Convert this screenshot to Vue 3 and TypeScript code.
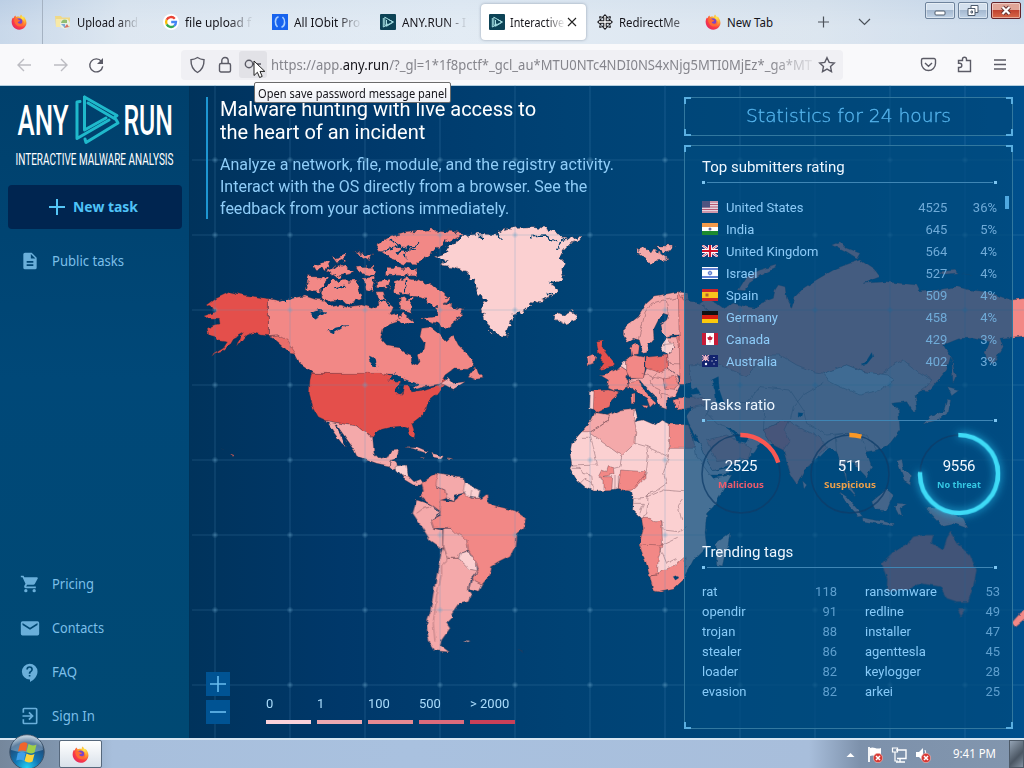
<script setup lang="ts">
interface Tab { title: string; icon: string; w: number; fade: boolean; active?: boolean }
const tabs: Tab[] = [
  { title: 'Upload and', icon: 'folder', w: 61, fade: true },
  { title: 'file upload f', icon: 'google', w: 66, fade: true },
  { title: 'All IObit Pro', icon: 'iobit', w: 66, fade: true },
  { title: 'ANY.RUN - I', icon: 'anyrun', w: 64, fade: true },
  { title: 'Interactive', icon: 'anyrun', w: 54, fade: true, active: true },
  { title: 'RedirectMe', icon: 'move', w: 61, fade: false },
  { title: 'New Tab', icon: 'fox', w: 46, fade: false },
]
const ratings = [
  { c: 'us', name: 'United States', n: 4525, p: '36%' },
  { c: 'in', name: 'India', n: 645, p: '5%' },
  { c: 'gb', name: 'United Kingdom', n: 564, p: '4%' },
  { c: 'il', name: 'Israel', n: 527, p: '4%' },
  { c: 'es', name: 'Spain', n: 509, p: '4%' },
  { c: 'de', name: 'Germany', n: 458, p: '4%' },
  { c: 'ca', name: 'Canada', n: 429, p: '3%' },
  { c: 'au', name: 'Australia', n: 402, p: '3%' },
]
const C = 2 * Math.PI * 39
const rings = [
  { k: 'mal', n: 2525, label: 'Malicious', w: 46, share: 0.205 },
  { k: 'sus', n: 511, label: 'Suspicious', w: 52, share: 0.05 },
  { k: 'ok', n: 9556, label: 'No threat', w: 44, share: 0.76 },
].map(r => ({ ...r, dash: `${r.share * C} ${C}` }))
const tagColumns = [
  [['rat', 118], ['opendir', 91], ['trojan', 88], ['stealer', 86], ['loader', 82], ['evasion', 82]],
  [['ransomware', 53], ['redline', 49], ['installer', 47], ['agenttesla', 45], ['keylogger', 28], ['arkei', 25]],
]
const legend = [
  { t: '0', k: 'l0' }, { t: '1', k: 'l1' }, { t: '100', k: 'l2' }, { t: '500', k: 'l3' }, { t: '> 2000', k: 'l4' },
]
const bottomNav = [
  { t: 'Pricing', i: 'cart', w: 42 }, { t: 'Contacts', i: 'mail', w: 52 }, { t: 'FAQ', i: 'faq', w: 25 }, { t: 'Sign In', i: 'login', w: 43 },
]
const gridX = [215, 290, 365, 440, 515, 590, 665, 740, 815, 890, 965]
const gridY = [160, 235, 310, 385, 460, 535, 610, 685]
</script>

<template>
  <div class="screen">
    <svg class="defs" width="0" height="0">
      <defs>
        <radialGradient id="foxg" cx=".75" cy=".2" r=".95">
          <stop offset="0" stop-color="#ffe84a" /><stop offset=".4" stop-color="#ff9a2e" /><stop offset=".7" stop-color="#fb3b44" /><stop offset="1" stop-color="#dc2468" />
        </radialGradient>
        <symbol id="fox" viewBox="0 0 16 16">
          <path d="M10 .5c1 1.200 1.300 1.800 1.800 2.300 1-.1 1.600.4 2.200 1.400 2 3 1.900 6.500-.1 8.900-3.200 3.900-9.300 3.500-12-.8C.2 9.700.2 6.300 1.700 3.800l.8.5c.3-1.200.9-2 1.800-2.800l.9 1.600C6.500 2.400 8 2.500 9 3 9 2 9.300 1.200 10 .5z" fill="url(#foxg)" />
          <circle cx="8" cy="7.800" r="3.500" fill="#7a44c8" />
          <path d="M3.200 5.200c2-.8 3.700-.2 4.800.8l1.500.6c-.6 1-1.700 1.200-2.700 1.500.1 1.400 2 2 3.600 1.300 1.400-.7 1.700-2.300.8-3.900 2.300 2 1.500 5.600-1.200 6.500-3.300 1-6.600-1.300-6.800-6.800z" fill="#ff6a33" />
        </symbol>
        <symbol id="anyrun" viewBox="0 0 16 16">
          <rect width="16" height="16" rx="1" fill="#0d4356" />
          <g fill="none" stroke="#a5dfe2" stroke-width="1"><path d="M3.300 4V13L12.500 8.300" /><path d="M4.800 3.200V11.500L8 10M4.800 3.200L13 8" /><path d="M6.500 6v6.300l7-4.300L9 5.800" /></g>
        </symbol>
        <symbol id="folder" viewBox="0 0 16 16">
          <path d="M0 2h6l1 1.500h8V13H1z" fill="#f0d987" /><path d="M1 5h12v8H1z" fill="#f7e9a8" />
          <circle cx="10" cy="10" r="5" fill="#e8f0e4" /><path d="M6 9a4 4 0 0 1 6-3v3z" fill="#90bd70" /><path d="M9 14l3-4 2 3z" fill="#d57266" /><path d="M6 10h4v4z" fill="#7daad5" />
        </symbol>
        <symbol id="google" viewBox="0 0 16 16">
          <circle cx="8" cy="8" r="8" fill="#fff" />
          <g fill="none" stroke-width="2.300"><path d="M11.800 4.700A5 5 0 0 0 3.600 5.800" stroke="#ea4335" /><path d="M3.600 5.800a5 5 0 0 0 .1 4.600" stroke="#fbbc05" /><path d="M3.700 10.400a5 5 0 0 0 7.500 1.500" stroke="#34a853" /><path d="M11.200 11.900A5 5 0 0 0 13 8H8.200" stroke="#4285f4" /></g>
        </symbol>
        <symbol id="iobit" viewBox="0 0 16 16">
          <rect width="16" height="16" fill="#1763ee" /><path d="M6.500 2.800C2.500 4 2.600 10.500 5.500 13M9.500 13.200C13.500 12 13.400 5.500 10.500 3" fill="none" stroke="#a9d0ff" stroke-width="1.600" />
        </symbol>
        <symbol id="move" viewBox="0 0 16 16">
          <path d="M8 .8l2.800 2.900H9.200v3.100h3.100V5.200L15.200 8l-2.900 2.800V9.200H9.200v3.100h1.600L8 15.200l-2.800-2.900h1.600V9.200H3.700v1.600L.8 8l2.900-2.800v1.600h3.100V3.700H5.200z" fill="#fff" stroke="#1d1d22" stroke-width="1.100" />
          <path d="M2.800 4.500V2.800h1.700M11.500 2.800h1.700v1.700M2.800 11.500v1.700h1.700M11.500 13.200h1.700v-1.700" fill="none" stroke="#1d1d22" stroke-width="1.200" />
        </symbol>
        <symbol id="err" viewBox="0 0 10 10"><circle cx="5" cy="5" r="4.700" fill="#d83a35" stroke="#f3c5c0" stroke-width=".6" /><path d="M3 3l4 4M7 3L3 7" stroke="#fff" stroke-width="1.500" /></symbol>
      </defs>
    </svg>

    <header class="tabbar">
      <div class="pinned"><svg width="16" height="16"><use href="#fox" /></svg></div>
      <div v-for="t in tabs" :key="t.title" class="tab" :class="{ active: t.active }">
        <svg width="16" height="16"><use :href="'#' + t.icon" /></svg>
        <svg class="tabtext" :class="{ fade: t.fade, soft: t.icon === 'move' }" :width="t.w + 2" height="18"><text x="0" y="14" :textLength="t.w" lengthAdjust="spacingAndGlyphs">{{ t.title }}</text></svg>
        <svg v-if="t.active" class="x" width="10" height="10" viewBox="0 0 10 10"><path d="M1 1l8 8M9 1L1 9" /></svg>
      </div>
      <svg class="tabtools" width="54" height="16" viewBox="0 0 54 16"><path d="M1 8h11M6.500 2.500v11M42 5l5.500 5.500L53 5" /></svg>
      <div class="winbtns">
        <span><svg width="30" height="17"><rect x="10" y="9" width="10" height="4" rx="1" /></svg></span>
        <span><svg width="30" height="17"><path d="M13 3.500h7v7h-3v3h-7v-7h3zM13 6.500h4v4M13 9h1.500v2H13z" /></svg></span>
        <span class="close"><svg width="30" height="17"><path class="cx" d="M11.500 5l7 7M18.500 5l-7 7" /><path class="cx2" d="M11.500 5l7 7M18.500 5l-7 7" /></svg></span>
      </div>
    </header>

    <div class="toolbar">
      <svg class="nav" width="110" height="24" viewBox="0 0 110 24">
        <path class="dim" d="M31 12H18M24 6l-6 6 6 6M54 12h13M61 6l6 6-6 6" />
        <path d="M101.500 8.500a6.500 6.500 0 1 0 1.200 4.800" /><path class="solid" d="M103 5v6h-6z" />
      </svg>
      <div class="urlbar">
        <svg class="i1" width="17" height="18" viewBox="0 0 17 18"><path d="M8.500 1.500c2 1.400 4 2 6.500 2.200.2 6-1.500 9.800-6.500 12.800C3.500 13.500 1.800 9.700 2 3.700c2.500-.2 4.500-.8 6.500-2.200z" /></svg>
        <svg class="i2" width="14" height="18" viewBox="0 0 14 18"><rect x="1.500" y="7.500" width="11" height="8.500" rx="1.500" /><path d="M3.800 7.500V4.700a3.200 3.200 0 0 1 6.400 0v2.800" /></svg>
        <span class="key"><svg width="20" height="14" viewBox="0 0 20 14"><circle cx="5" cy="6" r="3.700" /><path d="M9 6h8M14 6v3" /></svg></span>
        <svg class="url" width="542" height="24"><text x="0" y="17" textLength="541" lengthAdjust="spacingAndGlyphs">https://app.<tspan>any.run</tspan>/?_gl=1*1f8pctf*_gcl_au*MTU0NTc4NDI0NS4xNjg5MTI0MjEz*_ga*MT</text></svg>
        <svg class="star" width="18" height="18" viewBox="0 0 18 18"><path d="M9 1.700l2.200 4.700 5.100.6-3.800 3.500 1 5.100L9 13.100l-4.500 2.500 1-5.100L1.700 7l5.100-.6z" /></svg>
      </div>
      <svg class="right" width="88" height="20" viewBox="0 0 88 20">
        <path d="M3 3.500h11a1.500 1.500 0 0 1 1.500 1.500v3.500a7 7 0 0 1-14 0V5A1.500 1.500 0 0 1 3 3.500zM5 8l3.500 3.300L12 8" />
        <path d="M38.500 16.500v-4h1.200a2 2 0 0 0 0-4.200h-1.200V5.500h4V4.200a2 2 0 0 1 4 0v1.300h4v11z" />
        <path d="M74 5h12M74 9.500h12M74 14h12" />
      </svg>
    </div>

    <main class="content">
      <aside class="side">
        <svg class="logo" width="174" height="91" viewBox="8 85 174 91">
          <text class="big" x="17.500" y="135" textLength="51" lengthAdjust="spacingAndGlyphs" transform="translate(0 -67.500) scale(1 1.500)">ANY</text>
          <text class="big" x="123.500" y="135" textLength="49.500" lengthAdjust="spacingAndGlyphs" transform="translate(0 -67.500) scale(1 1.500)">RUN</text>
          <text class="sub" x="15.500" y="110" textLength="158" lengthAdjust="spacingAndGlyphs" transform="scale(1 1.500)">INTERACTIVE MALWARE ANALYSIS</text>
          <g fill="none" stroke="#1fb9cb" stroke-width="3" stroke-linejoin="round" stroke-linecap="round">
            <path d="M80 101.500L77 102v36.500L109 120" /><path d="M84.500 127V97L117 115.500 L115 117" /><path d="M88 103l28 16.500 2 3.500L86 142.500l-1-3.500" /><path d="M84.500 97v33L106 118" />
          </g>
        </svg>
        <button class="new"><svg width="16" height="16" viewBox="0 0 16 16"><path d="M0 8h16M8 0v16" /></svg><svg width="66" height="20"><text x="0" y="15" textLength="65" lengthAdjust="spacingAndGlyphs">New task</text></svg></button>
        <a class="item first"><svg class="ic" width="20" height="20" viewBox="0 0 24 24"><path d="M14 2H6a2 2 0 0 0-2 2v16a2 2 0 0 0 2 2h12a2 2 0 0 0 2-2V8zm2 16H8v-2h8zm0-4H8v-2h8zm-3-5V3.500L18.500 9z" /></svg>
          <svg width="74" height="22"><text x="0" y="16" textLength="72" lengthAdjust="spacingAndGlyphs">Public tasks</text></svg></a>
        <nav class="bottom">
          <a v-for="n in bottomNav" :key="n.t" class="item">
            <svg class="ic" width="20" height="20" viewBox="0 0 24 24">
              <path v-if="n.i === 'cart'" d="M7 18a2 2 0 1 0 0 4 2 2 0 0 0 0-4zM1 2v2h2l3.600 7.600-1.400 2.400C4.500 15.400 5.500 17 7 17h12v-2H7.400l1.100-2h7.500c.7 0 1.400-.4 1.700-1L21.300 5.500A1 1 0 0 0 20.400 4H5.200l-.9-2zm16 16a2 2 0 1 0 0 4 2 2 0 0 0 0-4z" />
              <path v-else-if="n.i === 'mail'" d="M21 4H3a2 2 0 0 0-2 2v13a2 2 0 0 0 2 2h18a2 2 0 0 0 2-2V6a2 2 0 0 0-2-2zm0 4.500l-9 5.500-9-5.500V6l9 5.700L21 6z" />
              <path v-else-if="n.i === 'faq'" d="M11.500 2a9.500 9.500 0 1 0 .5 19v3c4.900-2.300 9-7 9-12.500A9.500 9.500 0 0 0 11.500 2zm1 15.500h-2v-2h2zm0-3.500h-2c0-3.300 3-3 3-5a2 2 0 0 0-4 0h-2a4 4 0 0 1 8 0c0 2.500-3 2.800-3 5z" />
              <path v-else d="M10 15.600L11.500 17l5-5-5-5L10 8.400l2.700 2.600H3v2h9.700zM19 2H5a2 2 0 0 0-2 2v4h2V4h14v16H5v-4H3v4a2 2 0 0 0 2 2h14a2 2 0 0 0 2-2V4a2 2 0 0 0-2-2z" />
            </svg>
            <svg width="74" height="22"><text x="0" y="16" :textLength="n.w" lengthAdjust="spacingAndGlyphs">{{ n.t }}</text></svg>
          </a>
        </nav>
      </aside>

      <section class="stage">
        <svg class="map" width="835" height="653" viewBox="189 85 835 653">
          <defs>
            <filter id="rough" x="-5%" y="-5%" width="110%" height="110%"><feTurbulence type="fractalNoise" baseFrequency=".14" numOctaves="2" seed="4" /><feDisplacementMap in="SourceGraphic" scale="4" xChannelSelector="R" yChannelSelector="G" /><feGaussianBlur stdDeviation=".25" /></filter>
            <filter id="rough2" x="-5%" y="-5%" width="110%" height="110%"><feTurbulence type="fractalNoise" baseFrequency=".17" numOctaves="2" seed="9" /><feDisplacementMap in="SourceGraphic" scale="8" xChannelSelector="R" yChannelSelector="G" /><feGaussianBlur stdDeviation=".25" /></filter>
            <radialGradient id="node"><stop offset="0" stop-color="#6aa5c8" stop-opacity=".45" /><stop offset="1" stop-color="#6aa5c8" stop-opacity="0" /></radialGradient>
          </defs>
          <g class="land rough">
            <g transform="translate(190 220) scale(.33333)">
              <path class="c2" d="M235 236 270 243 320 232 345 228 375 238 400 240 425 260 450 255 470 262 515 255 545 265 570 255 560 215 580 215 590 245 610 262 600 285 620 280 630 300 600 310 580 325 572 355 590 375 625 380 645 398 663 405 665 430 680 437 690 425 685 405 700 390 703 370 690 350 695 325 720 322 745 340 770 365 790 345 805 375 830 400 845 420 855 435 835 448 790 447 765 465 750 492 700 500 680 510 660 490 625 468 600 465 372 460 360 450 330 430 315 402 290 365 262 345 235 347Z" />
              <path class="c4" d="M235 236 235 347 215 345 190 338 165 348 140 380 150 350 160 338 130 355 118 375 95 395 62 408 100 385 112 366 85 362 78 350 56 345 52 325 72 315 90 312 88 298 55 297 42 288 70 278 82 275 52 255 80 235 120 216 160 225Z" />
              <path class="c3" d="M235 347 262 345 290 360 318 402 300 400 275 375 245 350Z" />
              <path class="c4" d="M365 460H575L600 468 625 468 632 480 625 522 640 520 645 495 655 495 665 515 700 510 745 495 760 475 770 490 755 505 740 525 715 545 705 575 685 595 665 610 675 640 672 660 660 645 655 625 635 618 600 622 575 628 555 640 548 655 530 635 515 630 500 618 460 612 410 602 385 590 368 560 358 520 360 480Z" />
              <path class="c1" d="M410 602 460 612 500 618 515 630 530 635 548 655 552 700 570 718 595 712 605 692 627 690 620 715 600 722 598 738 560 730 500 708 490 685 465 650 440 615 435 612 450 640 466 677 455 670 430 635Z" />
              <path class="c1" d="M598 738 602 720 618 728 625 742 608 748Z" /><path class="c0" d="M618 738 650 735 655 768 635 765 620 750Z" />
              <path class="c1" d="M635 765 655 768 672 785 692 778 700 790 690 795 670 795 645 780Z" />
              <path class="c1" d="M645 680 680 680 715 695 705 698 670 686ZM725 700 760 708 755 716 730 712ZM775 713l10 2-10 2zM690 713h14l-6 4z" />
              <path class="c2" d="M835 470 858 440 865 460 880 475 855 478Z" /><path class="c1" d="M750 490 775 473 790 490 825 485 790 508 765 495Z" />
              <path class="c3" d="M125 702l8 2-4 6zM95 685l6 2" />
            </g>
          </g>
          <g class="land rough2">
            <g transform="translate(190 220) scale(.33333)">
              <path class="c2" d="M560 75 600 50 650 38 720 30 800 35 820 45 770 65 740 90 700 115 690 132 640 130 600 115 575 95ZM590 142 680 148 680 168 590 165ZM612 185 650 172 700 185 735 200 775 235 765 250 818 270 800 300 770 325 740 310 695 295 740 290 740 265 700 235 650 225 615 218ZM390 215 430 182 500 180 515 235 480 252 440 240 405 245ZM355 170 415 172 385 217 346 207ZM370 145 410 120 418 138 385 152ZM408 150 450 133 495 158 440 172ZM490 92 545 108 535 122ZM498 142 552 138 550 168 508 160ZM522 178 557 173 550 212 528 205ZM560 182 602 178 595 202 560 200ZM630 238 667 233 662 277 632 270ZM615 300 640 282 672 305 650 314ZM430 115 466 104 466 120 440 128Z" />
              <path class="hole" d="M358 282 380 272 408 275 380 295ZM410 332 468 316 430 341ZM538 408 552 415 562 447 546 435ZM590 480 613 463 642 475 625 484ZM630 488 633 522 621 522 624 500ZM645 485 682 493 670 505ZM665 512 702 500 700 508Z" />
              <path class="streak" d="M575 90 625 80 680 92M600 60 640 85 650 115M650 180 645 215M430 205 465 200M560 235 600 255M270 243 320 230M620 100 690 70" />
            </g>
            <g transform="translate(400 220) scale(.33333)">
              <path class="c0" d="M103 110 145 95 135 85 180 60 185 48 240 42 290 45 300 30 350 22 400 20 440 25 475 40 480 50 510 55 542 52 535 62 510 68 490 90 480 110 498 130 485 150 492 175 460 190 470 220 440 235 400 250 370 275 340 285 330 310 318 349 290 345 270 325 250 290 243 270 260 240 235 225 225 190 200 155 160 140 120 135 145 125Z" />
              <path class="streak" d="M390 50 440 48 470 65M445 185 475 190M440 220 470 222M285 45 305 52M250 60 240 45M495 55 470 90" />
              <path class="c0" d="M456 280 475 278 490 285 515 273 534 288 525 300 495 312 475 303Z" />
              <path class="c1" d="M708 90 735 83 750 95 765 90 780 100 808 120 780 118 765 120 750 135 735 112ZM760 78 827 78 815 90 790 97Z" />
            </g>
          </g>
          <g class="land rough">
            <g transform="translate(400 220) scale(.33333)">
              <path class="c1" d="M670 325 715 290 740 250 765 228 800 222 835 215 860 220V345L820 345 800 350 785 335 780 315 800 300 805 285 790 280 775 300 760 330 762 355 745 375 740 395 728 397 718 360 700 355 682 367 670 345Z" />
              <path class="bd" d="M715 360 725 320 735 280 755 250 790 240 800 248 805 285M800 240 825 235 850 232" />
              <path class="c4" d="M590 366 610 363 605 380 615 395 630 415 644 432 635 442 598 449 612 430 600 425 605 405 595 395Z" />
              <path class="c2" d="M558 412 580 402 588 410 582 430 562 435ZM600 465 625 460 650 448 665 440 685 455 680 475 685 500 665 510 640 512 622 505 625 480ZM692 385 705 368 718 380 715 402 695 405Z" />
              <path class="c3" d="M578 512 625 510 660 518 635 540 628 560 605 570 590 577 578 565Z" /><path class="c0" d="M568 512 582 514 580 568 566 565Z" />
              <path class="c0" d="M650 448 680 420 682 452 665 440Z" />
              <path class="c1" d="M683 478 730 472 740 445 803 445 835 470 840 500 825 530 800 535 800 568 780 560 770 535 735 500 720 480 700 490 685 490Z" />
              <path class="c2" d="M680 415 700 405 735 412 735 450 730 475 690 475 680 455ZM685 485 720 480 725 500 745 525 767 545 750 562 740 535 715 520 700 505 685 505ZM695 525l10-3v25l-8 2zM725 555l20 2-5 8zM790 475 825 468 838 490 825 508 795 505ZM822 540 860 530V572L825 562Z" />
              <path class="c3" d="M738 412 800 405 803 445 780 458 738 445Z" />
              <path class="c0" d="M780 385 800 352 820 358 825 385 800 405Z" /><path class="c1" d="M800 352 860 350V475L830 465 803 445 800 405 825 385Z" />
              <path class="bd" d="M780 375 825 370M803 430 850 432M725 460 790 480 795 505M750 480 760 500 780 510 785 535M770 460 755 478M785 520 820 530M830 470 850 480" />
              <path class="c2" d="M848 225 862 225V395L835 380 830 350 850 345Z" />
              <path class="c0" d="M585 578 630 585 660 570 705 565 712 590 705 605 730 600 765 615 785 600 810 612 860 620 920 750 940 775 995 765 940 860 920 880 915 940 920 980 880 1020 875 1030 850 1075 820 1105 780 1115 760 1112 750 1070 735 1020 718 975 730 925 725 895 698 870 700 835 695 815 660 805 615 812 580 813 560 805 530 780 510 745 515 735 510 700 515 670 545 635 575 600Z" />
              <path class="c1" d="M585 578 630 585 620 605 575 635 545 635 575 600ZM630 585 660 570 705 565 700 585 708 625 705 670 665 708 570 640 620 605Z" />
              <path class="c2" d="M808 612 865 615 880 655 890 685H808ZM595 770 605 750 620 755 625 740 640 742 642 762 610 770 638 770 635 812 612 812 612 780ZM655 805 662 750 690 752 735 755 735 775 715 795 700 810 675 812Z" />
              <path class="c2" d="M725 895 750 895 765 905 785 905 788 980 775 1010 772 1065 750 1068 735 1020 718 975 730 925ZM750 1068 772 1065 785 1050 820 1040 855 1010 855 1075 820 1108 780 1116 760 1112Z" />
              <path class="bd" d="M570 640 592 735 515 738M545 655H570M705 670 740 680 745 710 738 760 705 800M740 680 805 710V660M665 708 660 740 642 745M805 710 790 760 800 790 765 815 745 820M515 745 540 745 545 760 575 765 580 813M700 835 740 832 745 820 740 885M740 832 790 810 850 815M725 895 740 885M785 905 790 930 835 935 860 920M718 975 780 978 830 955M780 980 800 1030 830 1015M645 765V808M655 765V805M540 790 555 775 575 785M850 840 835 860 845 900M700 850 730 850 720 880" />
              <path class="hole" d="M820 1070l12-4 4 8-10 6z" />
              <path class="c0" d="M948 970 990 938 985 970 970 1038 950 1035Z" />
            </g>
            <g transform="translate(400 450) scale(.33333)">
              <path class="c2" d="M95 78 112 70 115 90 110 110 135 120 140 145 125 150 122 185 95 165 70 150 62 140 70 120 65 100Z" />
              <path class="c1" d="M112 72 150 78 190 85 200 110 190 130 165 135 160 155 140 145 135 120 108 108ZM50 150 95 165 120 190 92 210 100 235 128 240 128 297 90 270 65 230 38 190ZM130 235 155 235 200 265 205 300 180 310 175 325 140 325 128 290ZM215 388 245 405 235 424 207 415ZM128 290 140 325 175 325 215 358 235 360 210 390 205 420 215 430 205 455 175 462 155 490 160 500 140 520 150 535 125 570 120 585 148 606 105 602 90 580 82 550 80 520 90 490 100 430 115 350Z" />
              <path class="c0" d="M195 98 240 120 235 145 200 142 190 120ZM180 310 205 302 230 340 232 362 210 358 175 325Z" />
              <path class="c2" d="M122 150 160 155 190 130 210 145 245 145 260 133 265 160 300 172 345 182 377 205 372 235 348 255 345 290 330 320 300 335 275 350 270 375 245 405 215 390 235 360 230 340 205 300 200 270 170 250 155 235 130 235 100 235 92 210 120 195Z" />
              <path class="bd" d="M140 325 125 350 125 370 110 440 100 520 105 575M50 190 70 175 95 170M215 120 212 142" />
              <path class="c0" d="M188 572l8-2 2 6zM200 571l10 2-8 4zM355 598l14 6" />
            </g>
            <g transform="translate(680 90) scale(.33333)">
              <path class="c2" d="M-5 605 10 630 60 640 90 665 60 640 80 625 110 640 130 655 160 640 200 650 230 655 240 640 280 625 285 600 295 585 315 590 320 625 335 655 345 620 370 595 400 575 425 560 470 535 510 520 540 510 585 540 600 560 550 580 620 575 660 580 710 585 720 605 770 600 830 590 870 600 920 605 995 630 1040 625V737L1010 740 960 745 970 770 940 820 925 820 915 790 930 755 880 745 840 745 790 765 812 800 800 840 745 905 700 900 0 880Z" />
              <path class="c2" d="M175 600 200 560 240 540 290 525 285 534 240 557 210 577 195 602ZM455 465 480 455 500 475 540 490 530 507 500 488ZM775 545l50-4 10 8-45 4zM845 552l30 2M815 800l12 60-8 20z" />
              <path class="hole" d="M540 826 560 812 575 788 578 800 560 822Z" />
            </g>
            <g transform="translate(680 380) scale(.33333)">
              <path class="cm" d="M25-45 110-50 200-10 260-75 300-75 350-45 400-25 430-20 500-45 550-25 600-15 640-45 670-60 720-20 755 0 740 20 705 45 712 85 700 97 680 65 635 70 655 85 660 150 630 190 590 210 560 215 575 260 560 292 530 260 510 240 495 250 500 300 520 330 530 352 505 325 490 270 470 215 445 205 420 230 375 265 350 312 335 290 310 210 280 195 240 190 225 215 205 235 100 272 85 250 60 190 30 140 20 110 40 80Z" />
              <path class="cp" d="M430-20 500-45 550-25 620-15 645 0 600 30 540 45 480 20 450 5ZM60 190 85 250 100 272 160 260 140 285 90 285 50 230 40 180Z" />
              <path class="c2" d="M250 150 300 125 330 125 360 145 420 170 440 200 375 265 350 312 335 290 310 210 280 195ZM-5 50 70 52 75 75-5 90ZM80 180 140 165 215 205 205 235 110 245Z" />
              <path class="ired" d="M250 150 300 125 325 122 312 150 330 180 310 210 280 195Z" />
              <path class="hole" d="M95 0 115-10 118 30 130 65 110 70 105 30ZM138 142 162 160 170 182 200 188 205 175 180 170 155 148ZM20 30 50 20 60 40 25 45Z" />
              <path class="hole" d="M355 98l14 2-4 10-10-2z" />
              <path class="bd" d="M330 125 340 80 370 45 430 10M370 90 380 130 440 165 490 160 560 165 590 210M250 150 255 80 200 70 130 75M80 100 110 130 140 140M470 215 465 165 500 160M500 160 545 170 560 215M200 70 240 20 330 30 370 90M100 70 75 110" />
              <path class="c1" d="M478 335 500 350 547 405 535 407 500 370ZM545 413 640 430 635 438 545 423ZM575 365 620 328 640 345 620 392 590 390ZM645 380l10-10 25 2-20 12 6 25-10-8zM650 240 665 235 670 265 695 290 690 315 675 305ZM733 383 780 385 850 415 867 447 820 430 785 437ZM730 132 750 110 790 95 800 58 812 60 805 95 775 120ZM803 20 838 30 815 47ZM368 303 380 315 372 327Z" />
            </g>
            <g transform="translate(680 540) scale(.33333)">
              <path class="c3" d="M605 70 640 35 680 15 700-10 730-15 760-15 755 10 790 30 800-5 812-25 830 10 870 45 890 90 880 140 865 185 830 185 800 175 780 140 720 130 690 145 640 155 620 150 622 120ZM832 208 857 208 843 230Z" />
              <path class="c2" d="M995 248 1020 220 1040 205V232L1005 260Z" />
            </g>
          </g>
          <g class="grid">
            <path v-for="x in gridX" :key="'x' + x" :d="`M${x} 85V738`" />
            <path v-for="y in gridY" :key="'y' + y" :d="`M192 ${y}H1024`" />
          </g>
          <g v-for="x in gridX" :key="'n' + x"><circle v-for="y in gridY" :key="y" :cx="x" :cy="y" r="3.500" fill="url(#node)" /></g>
        </svg>

        <div class="intro">
          <h1>Malware hunting with live access to<br>the heart of an incident</h1>
          <p>Analyze a network, file, module, and the registry activity.<br>Interact with the OS directly from a browser. See the<br>feedback from your actions immediately.</p>
        </div>

        <div class="mapfoot">
          <div class="zoom">
            <button><svg width="24" height="24"><path d="M4 12h16M12 4v16" /></svg></button>
            <button><svg width="24" height="24"><path d="M4 12h16" /></svg></button>
          </div>
          <div class="legend"><div v-for="l in legend" :key="l.k"><span>{{ l.t }}</span><i :class="l.k"></i></div></div>
        </div>

        <div class="stats">
          <div class="frame title"><i class="tl"></i><i class="tr"></i><i class="bl"></i><i class="br"></i>
            <svg width="208" height="26"><text x="1" y="18" textLength="205" lengthAdjust="spacingAndGlyphs">Statistics for 24 hours</text></svg>
          </div>
          <div class="frame body"><i class="tl"></i><i class="tr"></i><i class="bl"></i><i class="br"></i>
            <h2>Top submitters rating</h2><div class="rule"></div>
            <div class="ratings">
              <div v-for="r in ratings" :key="r.c" class="row">
                <svg class="flag" width="16" height="12" viewBox="0 0 16 12">
                  <g v-if="r.c === 'us'"><rect width="16" height="12" fill="#e6d5e0" /><path d="M0 1h16M0 3.500h16M0 6h16M0 8.500h16M0 11h16" stroke="#b85a74" stroke-width="1.200" /><rect width="8" height="6.500" fill="#4f5480" /></g>
                  <g v-if="r.c === 'in'"><rect width="16" height="12" fill="#fff" /><rect width="16" height="4" fill="#f29a4a" /><rect y="8" width="16" height="4" fill="#1d8a2f" /><circle cx="8" cy="6" r="1.500" fill="#6468a5" /></g>
                  <g v-if="r.c === 'gb'"><rect width="16" height="12" fill="#1c2f78" /><path d="M0 0l16 12M16 0L0 12" stroke="#fff" stroke-width="2.400" /><path d="M0 0l16 12M16 0L0 12" stroke="#d0263c" stroke-width=".8" /><path d="M8 0v12M0 6h16" stroke="#fff" stroke-width="4" /><path d="M8 0v12M0 6h16" stroke="#d0142c" stroke-width="2.200" /></g>
                  <g v-if="r.c === 'il'"><rect width="16" height="12" fill="#fff" /><path d="M0 2h16M0 10h16" stroke="#2f59c8" stroke-width="1.500" /><path d="M8 3.800l2 3.300H6zM8 8.300L6 5h4z" fill="none" stroke="#4468c8" stroke-width=".7" /></g>
                  <g v-if="r.c === 'es'"><rect width="16" height="12" fill="#c9242c" /><rect y="3" width="16" height="6" fill="#f8c41c" /><rect x="3.500" y="4.500" width="3" height="3" fill="#b06030" /></g>
                  <g v-if="r.c === 'de'"><rect width="16" height="4" fill="#111" /><rect y="4" width="16" height="4" fill="#d81e10" /><rect y="8" width="16" height="4" fill="#fac90c" /></g>
                  <g v-if="r.c === 'ca'"><rect width="16" height="12" fill="#fff" /><path d="M0 0h4v12H0zM12 0h4v12h-4zM8 2.500l1 1.500 1.800.5L9.500 7 8.300 7v2.500h-.6V7L6.300 7 5.200 4.500 7 4z" fill="#c71c38" /></g>
                  <g v-if="r.c === 'au'"><rect width="16" height="12" fill="#13246e" /><path d="M0 0l7 6M7 0L0 6M3.500 0v6M0 3h7" stroke="#f0b8c4" stroke-width="1.200" /><circle cx="4" cy="9" r="1.200" fill="#fff" /><path d="M12 2v1M12 8.500v1M10 5.500v1M14 5v1" stroke="#fff" /></g>
                </svg>
                <span class="nm">{{ r.name }}</span><span class="ct">{{ r.n }}</span><span class="pc">{{ r.p }}</span>
              </div>
              <span class="thumb"></span>
            </div>
            <h2>Tasks ratio</h2><div class="rule"></div>
            <div class="rings">
              <svg v-for="r in rings" :key="r.k" :class="r.k" width="96" height="96" viewBox="-48 -48 96 96">
                <circle class="track" r="39" /><circle class="arc" r="39" :stroke-dasharray="r.dash" transform="rotate(-91)" />
                <text class="num" y="-3">{{ r.n }}</text><text class="lb" y="14" :textLength="r.w" lengthAdjust="spacingAndGlyphs">{{ r.label }}</text>
              </svg>
            </div>
            <h2>Trending tags</h2><div class="rule"></div>
            <div class="tags"><div v-for="(col, i) in tagColumns" :key="i"><p v-for="t in col" :key="t[0]"><span>{{ t[0] }}</span><b>{{ t[1] }}</b></p></div></div>
          </div>
        </div>
      </section>
    </main>

    <footer class="taskbar">
      <div class="task"><svg width="17" height="17"><use href="#fox" /></svg></div>
      <svg class="tray" width="94" height="20" viewBox="845 744 94 20">
        <path d="M846.500 757l4-4 4 4z" fill="#fff" />
        <path d="M869 747v15" stroke="#fff" stroke-width="1.800" /><path d="M870 748c4-2 6 2 11 0v8c-5 2-7-2-11 0z" fill="#fff" /><use href="#err" x="873" y="753" width="10" height="10" />
        <path d="M896 750h10v8.500h-9M900 759v3M896 762h9" fill="none" stroke="#fff" stroke-width="1.400" /><path d="M892.500 748h5v4h-5zM895 752v9h3" fill="none" stroke="#fff" stroke-width="1.200" />
        <path d="M916 752h3l4-4v13l-4-4h-3z" fill="#fff" /><path d="M925 750q2 4 0 8" stroke="#fff" fill="none" /><use href="#err" x="921" y="753" width="10" height="10" />
      </svg>
      <svg class="clock" width="44" height="20"><text x="0" y="14" textLength="43" lengthAdjust="spacingAndGlyphs">9:41 PM</text></svg>
      <div class="peek"></div>
    </footer>
    <svg class="orb" width="38" height="36" viewBox="8 733 38 36">
      <defs><radialGradient id="orbg" cx=".5" cy=".95" r=".9"><stop offset="0" stop-color="#22d0f4" /><stop offset=".4" stop-color="#1276b4" /><stop offset=".8" stop-color="#1d4a78" /><stop offset="1" stop-color="#9fb8cc" /></radialGradient></defs>
      <circle cx="27" cy="752" r="17.200" fill="url(#orbg)" stroke="#3e5268" />
      <path d="M11 750a16 15 0 0 1 32 0q-16 5-32 0z" fill="#fff" opacity=".3" />
      <path d="M20 744q4-3 7.500-.5l-1.500 8q-4-2-8 0z" fill="#f0642c" /><path d="M28.500 744q4 2.500 8 .5l-2 8q-4 2-8-.5z" fill="#9fcf48" /><path d="M17.700 753q4-2 8 0l-2 8q-3-2-7.500-.5z" fill="#3f9ee8" /><path d="M26.500 753.500q4 2.500 8 .5l-2 7.500q-4 2-8-.5z" fill="#fbd23c" />
    </svg>
    <div class="tip"><svg width="190" height="16"><text x="0" y="12.500" textLength="189" lengthAdjust="spacingAndGlyphs">Open save password message panel</text></svg></div>
    <svg class="cursor" width="14" height="20" viewBox="0 0 14 20"><path d="M1 1v14.500l3.400-3.200 2.200 5.200 2.600-1.100-2.200-5h4.800z" fill="#fff" stroke="#222" /></svg>
  </div>
</template>

<style>
html, body { margin: 0; overflow: hidden; }
</style>
<style scoped>
* { box-sizing: border-box; }
.screen { width: 1024px; height: 768px; position: relative; display: flex; flex-direction: column; overflow: hidden; font-family: Roboto, "Liberation Sans", sans-serif; }
svg { display: block; flex: none; }
.defs { position: absolute; }
.tabbar { height: 44px; display: flex; align-items: center; background: linear-gradient(#b8cbe000 0, #ffffff30 60%), linear-gradient(90deg, #bccfe5 0, #d6e2ee 12%, #dce7f2 45%, #d4e0ec 80%, #c2d4e8); flex: none; position: relative; }
.pinned { width: 43px; height: 44px; border-right: 1px solid #a5b2c2; padding: 14px 0 0 11px; }
.tab { width: 108.400px; height: 36px; padding-left: 12px; display: flex; align-items: center; gap: 6px; flex: none; }
.tab.active { width: 105px; margin: 0 -1px 0 4px; padding-left: 8px; background: #fff; border-radius: 4px; box-shadow: 0 0 3px #5c6a8090; gap: 5px; }
.x { margin-left: -4px; }
.x path { stroke: #222; stroke-width: 1.100; }
.tabtext text, .url text, .tip text { font-family: "Noto Sans", "Open Sans", sans-serif; font-size: 12px; fill: #15141a; }
.fade { -webkit-mask-image: linear-gradient(90deg, #000 65%, #0002 94%); mask-image: linear-gradient(90deg, #000 65%, #0002 94%); }
.soft { -webkit-mask-image: linear-gradient(90deg, #000 65%, #0009); mask-image: linear-gradient(90deg, #000 65%, #0009); }
.tabtools { margin-left: 16px; fill: none; stroke: #4c525a; stroke-width: 1.200; }
.winbtns { margin-left: auto; align-self: flex-start; display: flex; gap: 3px; padding: 2px 3px 0 0; }
.winbtns span { width: 30px; height: 17px; border: 1px solid #6e839c; border-radius: 2px; background: linear-gradient(#d3e0ee 45%, #a5b9d0 50%, #c0d2e6); box-shadow: inset 0 0 0 1px #ffffff70; }
.winbtns svg { margin: -1px; fill: #fff; stroke: #4d5b6c; stroke-width: 1; }
.winbtns .close { border-color: #64232a; background: linear-gradient(#e0a598 45%, #c14330 50%, #d8694a); }
.winbtns .cx { stroke: #63302f; stroke-width: 4; } .winbtns .cx2 { stroke: #fff; stroke-width: 2.200; }
.toolbar { height: 41px; display: flex; align-items: center; background: #f9f9fb; flex: none; }
.toolbar svg { fill: none; stroke: #5b5b66; stroke-width: 1.400; }
.nav { margin-right: 71px; } .nav .dim { stroke: #bcbcc2; } .nav .solid { fill: #5b5b66; stroke: none; }
.urlbar { width: 662px; height: 30px; background: #f0f0f4; border-radius: 4px; display: flex; align-items: center; padding-left: 8px; }
.i1 { margin-right: 12px; } .i2 { margin-right: 7px; }
.key { width: 28px; height: 27px; background: #e2e2e7; border-radius: 3px; padding: 7px 0 0 5px; margin-right: 4px; }
.urlbar .url { -webkit-mask-image: linear-gradient(90deg, #000 92%, #0002); mask-image: linear-gradient(90deg, #000 92%, #0002); }
.urlbar .url text { stroke: none; fill: #85858c; font-size: 14.500px; } .url tspan { fill: #15141a; }
.star { margin-left: 5px; }
.right { margin-left: 77px; }
.content { height: 653px; display: flex; border-top: 1px solid #b4cfdf; flex: none; background: #004878; }
.side { width: 190px; height: 652px; flex: none; background: linear-gradient(#00406c, #004878 45%, #004973); display: flex; flex-direction: column; padding: 0 8px; border-right: 1px solid #003258; }
.logo { margin-top: -1px; }
.logo text { fill: #fff; font-family: Roboto, sans-serif; }
.logo .big { font-size: 28.500px; font-weight: 500; } .logo .sub { font-size: 11px; font-weight: 400; }
.new { width: 174px; height: 44px; margin-top: 9px; border: 0; border-radius: 4px; background: #002550; display: flex; align-items: center; padding: 0 0 0 41px; gap: 8px; flex: none; }
.new path { stroke: #55c6f6; stroke-width: 2; }
.new text { font: bold 15px "Noto Sans", sans-serif; fill: #4fc3f7; }
.item { height: 44px; display: flex; align-items: center; gap: 12px; padding-left: 12px; }
.item .ic { fill: #6aafda; } .item text { font: 14px "Noto Sans", sans-serif; fill: #7cbfe8; }
.first { margin-top: 10px; }
.bottom { margin-top: 280px; }
.stage { flex: 1; position: relative; height: 652px; background: linear-gradient(90deg, #00335c 0, #00386a 18%, #004274 45%, #004a7e 80%, #004f8c); }
.map { position: absolute; left: -1px; top: -1px; }
.land path { stroke: #54333f; stroke-opacity: .6; stroke-width: 1.800; stroke-linejoin: round; }
.rough { filter: url(#rough); } .rough2 { filter: url(#rough2); }
.c0 { fill: #fbd0d1; } .c1 { fill: #f4a9aa; } .c2 { fill: #f28886; } .c3 { fill: #ea6e6b; } .c4 { fill: #e4504c; }
.cm { fill: #e4a3a6; } .cp { fill: #e0bfc8; } .ired { fill: #ff7070; }
.land .hole { fill: #00406f; stroke: #00406f; }
.land .streak { fill: none; stroke: #003c6a; stroke-opacity: 1; stroke-width: 5; }
.land .bd { fill: none; }
.grid path { stroke: #5b9cc4; stroke-opacity: .17; stroke-width: 1.600; }
.intro { position: absolute; left: 16px; top: 11px; height: 122px; border-left: 2px solid #1e96d2; padding: 1px 0 0 12px; }
.intro h1 { margin: 0; font-weight: 400; font-size: 20px; line-height: 23px; color: #fff; white-space: nowrap; }
.intro p { margin: 10px 0 0; font-size: 16px; line-height: 22px; color: #8fcdf8; white-space: nowrap; }
.mapfoot { position: absolute; left: 16px; bottom: 14px; display: flex; align-items: flex-end; gap: 36px; }
.zoom { display: flex; flex-direction: column; gap: 4px; }
.zoom button { width: 24px; height: 24px; border: 0; padding: 0; background: #005393; } .zoom path { stroke: #68bdf0; stroke-width: 1.600; }
.legend { display: flex; gap: 6px; } .legend div { width: 45px; }
.legend span { display: block; font-size: 13px; line-height: 16px; color: #aadcfb; white-space: nowrap; }
.legend i { display: block; height: 4px; margin-top: 8px; } .l0 { background: #fad2da; } .l1 { background: #eda9b1; } .l2 { background: #e78a92; } .l3 { background: #dc6b7c; } .l4 { background: #ca4058; }
.stats { position: absolute; left: 494px; top: 11px; width: 329px; }
.frame { position: relative; border: 1px solid #32789f; background: rgba(0, 75, 126, .72); }
.frame > i { position: absolute; width: 7px; height: 7px; border: 0 solid #5aaee0; }
.tl { left: -1px; top: -1px; border-width: 2px 0 0 2px !important; } .tr { right: -1px; top: -1px; border-width: 2px 2px 0 0 !important; }
.bl { left: -1px; bottom: -1px; border-width: 0 0 2px 2px !important; } .br { right: -1px; bottom: -1px; border-width: 0 2px 2px 0 !important; }
.title { height: 39px; display: flex; align-items: center; justify-content: center; padding-top: 1px; background: rgba(0, 72, 122, .6); }
.title text { font: 200 17px "DejaVu Sans", sans-serif; fill: #55b4ec; stroke: #55b4ec; stroke-width: .3; }
.body { margin-top: 9px; height: 584px; padding: 11px 15px 0 17px; }
.body h2 { margin: 0; font-weight: 400; font-size: 15px; line-height: 20px; color: #eef7ff; }
.rule { height: 1px; margin: 5px 4px 0 5px; background: #3f86b5; position: relative; }
.rule::before, .rule::after { content: ""; position: absolute; top: -1px; width: 3px; height: 3px; background: #7cc4f0; } .rule::before { left: -5px; } .rule::after { right: -4px; }
.ratings { position: relative; margin-top: 13px; height: 199px; }
.row { height: 22px; display: flex; align-items: center; font-size: 13px; color: #8ccbf8; }
.nm { width: 151px; margin-left: 8px; white-space: nowrap; } .ct { width: 72px; text-align: right; } .pc { width: 50px; text-align: right; }
.ct, .pc { color: #6fabd8; }
.thumb { position: absolute; right: -12px; top: 0; width: 4px; height: 13px; background: #4fa8e0; }
.rings { height: 109px; margin: 5px 0 7px -9px; display: flex; gap: 13px; }
.rings svg { overflow: visible; } .rings circle { fill: none; }
.track { stroke: #0d3c68; stroke-width: 1.600; opacity: .75; } .arc { stroke-width: 4.400; }
.rings text { text-anchor: middle; } .num { font-size: 15px; fill: #f2f8ff; letter-spacing: -.3px; } .lb { font: bold 9.500px "Noto Sans", sans-serif; }
.mal .arc { stroke: #fa5752; } .mal .lb { fill: #ef5b6c; } .sus .arc { stroke: #fa9826; } .sus .lb { fill: #eda04a; }
.ok .arc { stroke: #3edaf6; filter: drop-shadow(0 0 4px #22b8e8); } .ok .lb { fill: #35c8e4; }
.tags { display: flex; justify-content: space-between; margin: 14px -3px 0 0; }
.tags > div { width: 135px; } .tags p { margin: 0; height: 20px; line-height: 20px; font-size: 13px; display: flex; justify-content: space-between; color: #86caf8; } .tags b { font-weight: 400; color: #5e9fce; }
.taskbar { height: 30px; flex: none; border-top: 2px solid #d8e6f2; background: linear-gradient(90deg, #75879c 0, #8095ad 5.500%, #a8bfdc 11%, #a9c1df 40%, #a8bedb 79%, #7d91ab 84%, #8296ae 100%); display: flex; align-items: center; padding-left: 59px; }
.task { width: 43px; height: 28px; border-radius: 2px; border: 1px solid #56687c; background: linear-gradient(#fff, #d9e1ea); display: flex; align-items: center; justify-content: center; }
.tray { margin-left: 743px; }
.clock { margin-left: 14px; } .clock text { font: 12px "Noto Sans", sans-serif; fill: #fff; }
.peek { margin-left: auto; width: 15px; height: 28px; border: 1px solid #4d5a68; background: linear-gradient(135deg, #94a3b4, #4b5663 60%, #8492a2); }
.orb { position: absolute; left: 8px; top: 733px; }
.tip { position: absolute; left: 254px; top: 82px; width: 197px; height: 21px; border: 1px solid #6c6c6c; border-radius: 2px; background: linear-gradient(#fff, #eef0f6); padding: 2px 3px; }
.cursor { position: absolute; left: 253px; top: 60px; }
</style>
